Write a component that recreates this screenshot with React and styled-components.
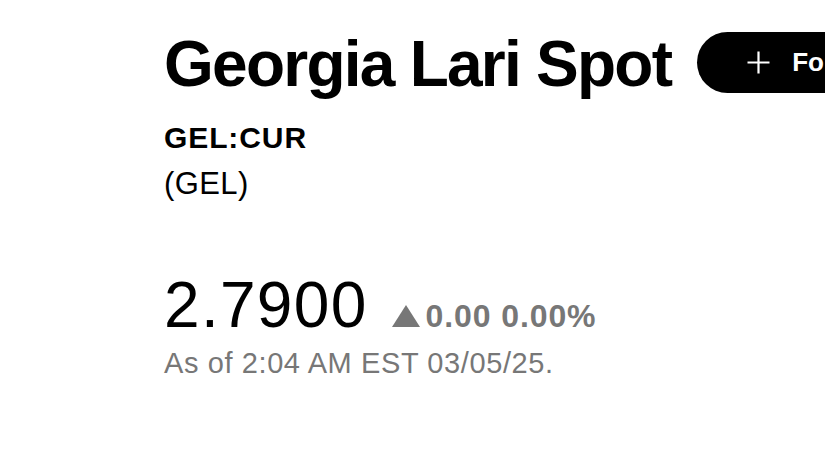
import React from 'react';
import styled, { createGlobalStyle } from 'styled-components';

const GlobalStyle = createGlobalStyle`
  html, body {
    margin: 0;
    padding: 0;
    background: #fff;
    overflow: hidden;
  }
  body {
    font-family: "Liberation Sans", Arial, sans-serif;
    color: #000;
  }
`;

const Page = styled.div`
  width: 825px;
  height: 465px;
  padding: 29px 0 0 164px;
  box-sizing: border-box;
  overflow: hidden;
`;

const TitleRow = styled.div`
  display: flex;
  align-items: center;
  gap: 26px;
  height: 70px;
  white-space: nowrap;
`;

const Title = styled.h1`
  margin: 0;
  font-size: 64px;
  line-height: 70px;
  font-weight: 700;
  letter-spacing: -1.75px;
  flex-shrink: 0;
`;

const FollowButton = styled.button`
  flex-shrink: 0;
  display: flex;
  align-items: center;
  gap: 21px;
  height: 61px;
  padding: 0 48px 0 49px;
  border: none;
  border-radius: 31px;
  background: #000;
  color: #fff;
  font-family: inherit;
  font-size: 26px;
  font-weight: 700;
  margin-top: -3px;
`;

const Ticker = styled.div`
  margin-top: 22px;
  font-size: 30px;
  line-height: 34px;
  font-weight: 700;
  letter-spacing: 0.9px;
`;

const Currency = styled.div`
  margin-top: 11px;
  font-size: 31px;
  line-height: 36px;
  letter-spacing: 0.4px;
`;

const PriceRow = styled.div`
  display: flex;
  align-items: baseline;
  margin-top: 68px;
  height: 70px;
`;

const Price = styled.span`
  font-size: 64px;
  line-height: 70px;
  letter-spacing: 1.3px;
`;

const Change = styled.span`
  display: inline-flex;
  align-items: baseline;
  gap: 6px;
  margin-left: 24px;
  font-size: 32px;
  font-weight: 700;
  letter-spacing: 0.9px;
  color: ${(p) => p.color};
`;

const Triangle = styled.span`
  display: inline-block;
  width: 0;
  height: 0;
  border-left: 14px solid transparent;
  border-right: 14px solid transparent;
  border-bottom: 22px solid ${(p) => p.color};
`;

const AsOf = styled.div`
  margin-top: 6px;
  font-size: 29px;
  line-height: 34px;
  letter-spacing: 0.6px;
  color: #777;
`;

const PlusIcon = () => (
  <svg width="25" height="25" viewBox="0 0 25 25">
    <path d="M12.5 1.5v22M1.5 12.5h22" stroke="#fff" strokeWidth="2.2" />
  </svg>
);

export default function App() {
  const gray = '#777';
  return (
    <>
      <GlobalStyle />
      <Page>
        <TitleRow>
          <Title>Georgia Lari Spot</Title>
          <FollowButton>
            <PlusIcon />
            Follow
          </FollowButton>
        </TitleRow>
        <Ticker>GEL:CUR</Ticker>
        <Currency>(GEL)</Currency>
        <PriceRow>
          <Price>2.7900</Price>
          <Change color={gray}>
            <Triangle color={gray} />
            0.00 0.00%
          </Change>
        </PriceRow>
        <AsOf>As of 2:04 AM EST 03/05/25.</AsOf>
      </Page>
    </>
  );
}
